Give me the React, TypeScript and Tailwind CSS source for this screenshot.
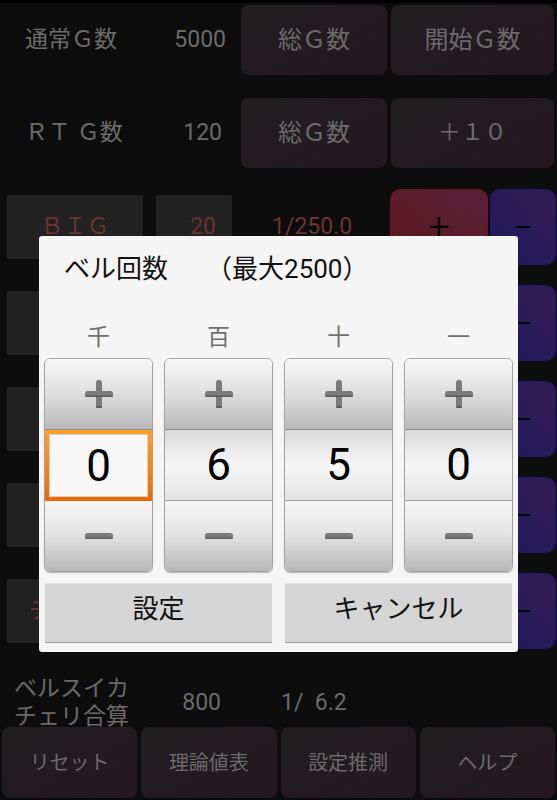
import React from "react";

function DarkBtn({ children, className = "" }: { children: React.ReactNode; className?: string }) {
  return (
    <div
      className={`flex items-center justify-center rounded-[8px] bg-linear-to-br from-[#201f20] to-[#25171f] text-[#6b6b6b] ${className}`}
    >
      {children}
    </div>
  );
}

const counters = [
  { label: "ＢＩＧ", count: "20", prob: "1/250.0" },
  { label: "ＲＥＧ", count: "10", prob: "1/500.0" },
  { label: "スイカ", count: "40", prob: "1/125.0" },
  { label: "ベル", count: "650", prob: "1/ 7.7" },
  { label: "チェリー", count: "110", prob: "1/45.5" },
];

function PlusIcon() {
  return (
    <svg width="30" height="30" viewBox="0 0 30 30">
      <rect x="1" y="12" width="28" height="6" rx="2.5" fill="#7b7b7b" />
      <rect x="12" y="1" width="6" height="28" rx="2.5" fill="#7b7b7b" />
      <rect x="1" y="16.5" width="28" height="1.5" rx="0.75" fill="#5e5e5e" />
      <rect x="12" y="27" width="6" height="2" rx="1" fill="#5e5e5e" />
    </svg>
  );
}

function MinusIcon() {
  return (
    <svg width="30" height="8" viewBox="0 0 30 8">
      <rect x="1" y="1" width="28" height="6" rx="2.5" fill="#7b7b7b" />
      <rect x="1" y="5.5" width="28" height="1.5" rx="0.75" fill="#5e5e5e" />
    </svg>
  );
}

function Spinner({ value, focused }: { value: string; focused?: boolean }) {
  return (
    <div className="flex h-[214px] flex-col overflow-hidden rounded-[6px] border border-[#a3a3a3] shadow-[0_1px_1px_rgba(0,0,0,0.25)]">
      <div className="flex h-[71px] items-center justify-center border-b border-[#8c8c8c] bg-linear-to-b from-[#f6f6f6] via-[#dedede] to-[#b9b9b9]">
        <PlusIcon />
      </div>
      {focused ? (
        <div className="h-[71px] bg-linear-to-b from-[#ffa02c] to-[#ef6600] p-[4px]">
          <div className="flex h-full items-center justify-center border border-[#cfcfcf] bg-[#f7f7f7] text-[44px] leading-none text-black">
            {value}
          </div>
        </div>
      ) : (
        <div className="flex h-[71px] items-center justify-center border-b border-[#a0a0a0] bg-linear-to-b from-[#dadada] via-[#f6f6f6] to-[#e4e4e4] text-[44px] leading-none text-black">
          {value}
        </div>
      )}
      <div className="flex flex-1 items-center justify-center bg-linear-to-b from-[#f6f6f6] via-[#e2e2e2] to-[#b6b6b6]">
        <MinusIcon />
      </div>
    </div>
  );
}

export default function App() {
  return (
    <div className="relative h-[800px] w-[557px] overflow-hidden border-t-[3px] border-black bg-[#0d0d0d] font-[Roboto,'Noto_Sans_CJK_JP',sans-serif]">
      {/* Row 1 */}
      <div className="mt-[2px] flex h-[70px] items-center">
        <div className="w-[146px] pl-[25px] text-[23px] text-[#6b6b6b]">通常Ｇ数</div>
        <div className="w-[80px] text-right text-[23px] text-[#6b6b6b]">5000</div>
        <DarkBtn className="ml-[15px] h-[70px] w-[146px] text-[24px]">総Ｇ数</DarkBtn>
        <DarkBtn className="ml-[4px] h-[70px] w-[163px] text-[24px]">開始Ｇ数</DarkBtn>
      </div>
      {/* Row 2 */}
      <div className="mt-[23px] flex h-[70px] items-center">
        <div className="w-[146px] pl-[25px] text-[23px] text-[#6b6b6b]">ＲＴ Ｇ数</div>
        <div className="w-[76px] text-right text-[23px] text-[#6b6b6b]">120</div>
        <DarkBtn className="ml-[19px] h-[70px] w-[146px] text-[24px]">総Ｇ数</DarkBtn>
        <DarkBtn className="ml-[4px] h-[70px] w-[163px] text-[23px]">＋１０</DarkBtn>
      </div>
      {/* Counter rows */}
      {counters.map((c, i) => (
        <div key={i} className={`flex h-[76px] items-center ${i === 0 ? "mt-[21px]" : "mt-[20px]"}`}>
          <div className="ml-[7px] flex h-[64px] w-[136px] items-center justify-center rounded-[2px] bg-[#222222] text-[23px] text-[#6b3232]">
            {c.label}
          </div>
          <div className="ml-[13px] flex h-[64px] w-[76px] items-center justify-end rounded-[2px] bg-[#222222] pr-[16px] text-[23px] text-[#6b3232]">
            {c.count}
          </div>
          <div className="ml-[40px] text-[23px] text-[#6b3434]">{c.prob}</div>
          <div className="ml-auto flex h-[76px] w-[98px] items-center justify-center rounded-[10px] border border-[#6e1616] bg-linear-to-tr from-[#5c171b] to-[#5a203b] text-[38px] leading-none font-light text-black">
            +
          </div>
          <div className="mr-[1px] ml-[2px] flex h-[76px] w-[66px] items-center justify-center rounded-[10px] border border-[#1a1874] bg-linear-to-tr from-[#1d175f] to-[#341d52] text-[34px] leading-none font-light text-black">
            −
          </div>
        </div>
      ))}
      {/* Row 8 */}
      <div className="flex h-[78px] items-start overflow-hidden pt-[26px]">
        <div className="w-[166px] pl-[14px] text-[23px] leading-[28px] text-[#6b6b6b]">
          ベルスイカ
          <br />
          チェリ合算
        </div>
        <div className="mt-[14px] w-[55px] text-right text-[23px] leading-[28px] text-[#6b6b6b]">800</div>
        <div className="mt-[14px] ml-[60px] text-[23px] leading-[28px] whitespace-pre text-[#6b6b6b]">1/  6.2</div>
      </div>
      {/* Bottom buttons */}
      <div className="flex h-[71px] gap-[4px] px-[2px]">
        <DarkBtn className="flex-1 text-[20px]">リセット</DarkBtn>
        <DarkBtn className="flex-1 text-[20px]">理論値表</DarkBtn>
        <DarkBtn className="flex-1 text-[20px]">設定推測</DarkBtn>
        <DarkBtn className="flex-1 text-[20px]">ヘルプ</DarkBtn>
      </div>

      {/* Dialog */}
      <div className="absolute top-[233px] left-[39px] flex h-[416px] w-[479px] flex-col rounded-[3px] bg-[#f5f5f5]">
        <div className="flex pt-[16px] pl-[25px] text-[26px] leading-[34px] text-[#111]">
          <span>ベル回数</span>
          <span className="ml-[38px]">（最大2500）</span>
        </div>
        <div className="mt-[36px] grid h-[32px] grid-cols-4 gap-[11px] px-[5px] text-center text-[23px] leading-[32px] text-[#707070]">
          <div>千</div>
          <div>百</div>
          <div>十</div>
          <div>一</div>
        </div>
        <div className="mt-[4px] grid grid-cols-4 gap-[11px] px-[5px]">
          <Spinner value="0" focused />
          <Spinner value="6" />
          <Spinner value="5" />
          <Spinner value="0" />
        </div>
        <div className="mt-[11px] grid grid-cols-2 gap-[13px] px-[6px]">
          <div className="flex h-[60px] items-center justify-center border-t border-b border-t-[#e4e4e4] border-b-[#9a9a9a] bg-[#d5d5d5] pb-[8px] text-[26px] text-[#111]">
            設定
          </div>
          <div className="flex h-[60px] items-center justify-center border-t border-b border-t-[#e4e4e4] border-b-[#9a9a9a] bg-[#d5d5d5] pb-[8px] text-[26px] text-[#111]">
            キャンセル
          </div>
        </div>
      </div>
    </div>
  );
}
